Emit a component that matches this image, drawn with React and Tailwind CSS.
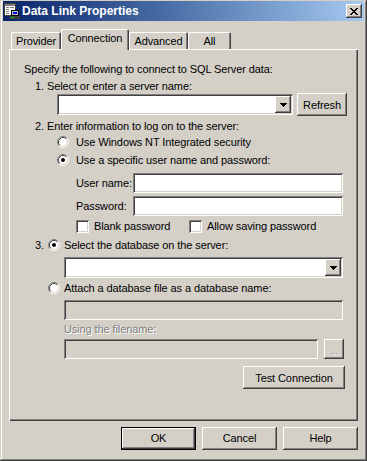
import { ChevronDown } from 'lucide-react'

const RAISED =
  'bg-[#d4d0c8] shadow-[inset_-1px_-1px_#404040,inset_1px_1px_#fff,inset_-2px_-2px_#808080,inset_2px_2px_#d4d0c8]'
const SUNKEN =
  'shadow-[inset_1px_1px_#808080,inset_-1px_-1px_#fff,inset_2px_2px_#404040,inset_-2px_-2px_#d4d0c8]'
const DISABLED_TEXT = 'text-[#808080] [text-shadow:1px_1px_0_#fff]'

function Radio({ checked }) {
  return (
    <svg width="12" height="12" viewBox="0 0 12 12" className="shrink-0">
      <circle cx="6" cy="6" r="5" fill="#fff" />
      <path d="M2.11 9.89A5.5 5.5 0 0 1 9.89 2.11" fill="none" stroke="#808080" />
      <path d="M9.89 2.11A5.5 5.5 0 0 1 2.11 9.89" fill="none" stroke="#fff" />
      <path d="M2.82 9.18A4.5 4.5 0 0 1 9.18 2.82" fill="none" stroke="#404040" />
      <path d="M9.18 2.82A4.5 4.5 0 0 1 2.82 9.18" fill="none" stroke="#d4d0c8" />
      {checked ? <circle cx="6" cy="6" r="2" fill="#000" /> : null}
    </svg>
  )
}

function Checkbox() {
  return <div className={`h-[13px] w-[13px] shrink-0 bg-white ${SUNKEN}`} />
}

function Combo({ width }) {
  return (
    <div className={`flex h-[21px] justify-end bg-white p-[2px] ${SUNKEN}`} style={{ width }}>
      <div className={`flex h-[17px] w-[16px] items-center justify-center ${RAISED}`}>
        <svg width="7" height="4" viewBox="0 0 7 4" shapeRendering="crispEdges">
          <path d="M0 0h7v1h-1v1h-1v1h-1v1h-1v-1h-1v-1h-1v-1h-1z" fill="#000" />
        </svg>
      </div>
    </div>
  )
}

function Field({ width, disabled }) {
  return (
    <div
      className={`h-[20px] shrink-0 ${disabled ? 'bg-[#d4d0c8]' : 'bg-white'} ${SUNKEN}`}
      style={{ width }}
    />
  )
}

function Button({ children, width, height = 23, isDefault }) {
  if (isDefault) {
    return (
      <div className="border border-black" style={{ width, height }}>
        <div className={`flex h-full w-full items-center justify-center ${RAISED}`}>{children}</div>
      </div>
    )
  }
  return (
    <div className={`flex items-center justify-center ${RAISED}`} style={{ width, height }}>
      {children}
    </div>
  )
}

function Tab({ label, width, selected }) {
  if (selected) {
    return (
      <div
        className="relative z-10 -mb-px h-[21px] rounded-t-[2px] bg-[#d4d0c8] pt-[2px] text-center leading-[14px] shadow-[inset_1px_1px_#fff,inset_-1px_0_#404040,inset_-2px_0_#808080]"
        style={{ width }}
      >
        {label}
      </div>
    )
  }
  return (
    <div
      className="h-[17px] rounded-t-[2px] bg-[#d4d0c8] pt-[2px] text-center leading-[14px] shadow-[inset_1px_1px_#fff,inset_-1px_0_#404040,inset_-2px_0_#808080]"
      style={{ width }}
    >
      {label}
    </div>
  )
}

function TitleIcon() {
  return (
    <svg width="16" height="16" viewBox="0 0 16 16" shapeRendering="crispEdges">
      <rect x="0.5" y="0.5" width="11" height="12" fill="#fff" stroke="#404040" />
      <rect x="1" y="1" width="10" height="2" fill="#808080" />
      <rect x="2" y="4" width="3" height="1" fill="#808080" />
      <rect x="6" y="4" width="4" height="1" fill="#808080" />
      <rect x="2" y="6" width="3" height="1" fill="#808080" />
      <rect x="2" y="8" width="3" height="1" fill="#808080" />
      <rect x="2" y="10" width="3" height="1" fill="#808080" />
      <rect x="7.5" y="7.5" width="7" height="5" fill="#c0c0c0" stroke="#000" />
      <rect x="9" y="9" width="4" height="2" fill="#0000ff" />
      <rect x="6" y="13" width="10" height="3" fill="#404040" />
      <rect x="7" y="14" width="3" height="1" fill="#00c000" />
    </svg>
  )
}

function App() {
  return (
    <div className="h-[461px] w-[367px] bg-[#d4d0c8] px-[3px] pt-[1px] text-[11px] tracking-[-0.1px] text-black [font-family:'Liberation_Sans',Arial,sans-serif] shadow-[inset_-1px_-1px_#404040,inset_1px_1px_#d4d0c8,inset_-2px_-2px_#808080,inset_2px_2px_#fff]">
      <div className="flex h-[20px] items-center bg-gradient-to-r from-[#0a246a] to-[#a6caf0] pl-[1px] pr-[2px]">
        <TitleIcon />
        <span className="ml-[2px] flex-1 text-[12px] font-bold tracking-normal text-white">Data Link Properties</span>
        <div className={`flex h-[14px] w-[16px] items-center justify-center ${RAISED}`}>
          <svg width="8" height="7" viewBox="0 0 8 7" shapeRendering="crispEdges">
            <path
              d="M0 0h2v1h1v1h2v-1h1v-1h2v1h-1v1h-1v1h-1v1h1v1h1v1h1v1h-2v-1h-1v-1h-2v1h-1v1h-2v-1h1v-1h1v-1h1v-1h-1v-1h-1v-1h-1z"
              fill="#000"
            />
          </svg>
        </div>
      </div>

      <div className="ml-[8px] mt-[8px] flex h-[20px] items-end">
        <Tab label="Provider" width={50} />
        <Tab label="Connection" width={68} selected />
        <Tab label="Advanced" width={59} />
        <Tab label="All" width={43} />
      </div>

      <div className="ml-[6px] h-[372px] w-[349px] pl-px pt-px shadow-[inset_1px_1px_#fff,inset_-1px_-1px_#404040,inset_-2px_-2px_#808080]">
        <div className="flex flex-col leading-[14px]">
          <div className="ml-[14px] mt-[12px] h-[14px]">Specify the following to connect to SQL Server data:</div>
          <div className="ml-[25px] mt-[3px] h-[14px]">1. Select or enter a server name:</div>
          <div className="ml-[47px] flex h-[23px] items-center gap-[4px]">
            <Combo width={236} />
            <Button width={50}>Refresh</Button>
          </div>
          <div className="ml-[25px] mt-[3px] h-[14px]">2. Enter information to log on to the server:</div>
          <div className="ml-[47px] mt-[2px] flex h-[14px] items-center gap-[7px]">
            <Radio />
            <span>Use Windows NT Integrated security</span>
          </div>
          <div className="ml-[47px] mt-[4px] flex h-[14px] items-center gap-[7px]">
            <Radio checked />
            <span>Use a specific user name and password:</span>
          </div>
          <div className="ml-[66px] mt-[6px] flex h-[20px] items-center">
            <span className="w-[57px]">User name:</span>
            <Field width={210} />
          </div>
          <div className="ml-[66px] mt-[3px] flex h-[20px] items-center">
            <span className="w-[57px]">Password:</span>
            <Field width={210} />
          </div>
          <div className="ml-[66px] mt-[3px] flex h-[14px] items-center">
            <div className="flex w-[113px] items-center gap-[5px]">
              <Checkbox />
              <span>Blank password</span>
            </div>
            <div className="flex items-center gap-[5px]">
              <Checkbox />
              <span>Allow saving password</span>
            </div>
          </div>
          <div className="ml-[25px] mt-[5px] flex h-[14px] items-center">
            <span className="w-[13px]">3.</span>
            <Radio checked />
            <span className="ml-[4px]">Select the database on the server:</span>
          </div>
          <div className="ml-[54px] mt-[5px]">
            <Combo width={279} />
          </div>
          <div className="ml-[38px] mt-[3px] flex h-[14px] items-center gap-[4px]">
            <Radio />
            <span>Attach a database file as a database name:</span>
          </div>
          <div className="ml-[54px] mt-[5px]">
            <Field width={279} disabled />
          </div>
          <div className={`ml-[54px] mt-[2px] h-[14px] ${DISABLED_TEXT}`}>Using the filename:</div>
          <div className="ml-[54px] mt-[3px] flex items-center gap-[6px]">
            <Field width={254} disabled />
            <div className={`flex h-[20px] w-[20px] items-end justify-center pb-[4px] ${RAISED}`}>
              <span className={`text-[9px] leading-[8px] ${DISABLED_TEXT}`}>...</span>
            </div>
          </div>
          <div className="ml-[233px] mt-[7px]">
            <Button width={102}>Test Connection</Button>
          </div>
        </div>
      </div>

      <div className="mr-[6px] mt-[6px] flex justify-end gap-[6px]">
        <Button width={75} isDefault>
          OK
        </Button>
        <Button width={75}>Cancel</Button>
        <Button width={75}>Help</Button>
      </div>
    </div>
  )
}

export default App
